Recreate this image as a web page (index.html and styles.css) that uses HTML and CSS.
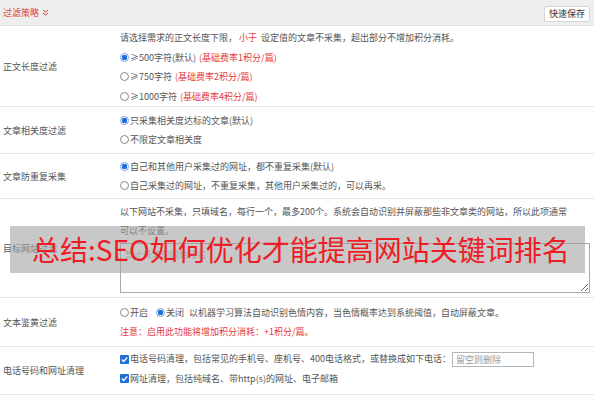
FILE: index.html
```html
<!DOCTYPE html>
<html lang="zh-CN">
<head>
<meta charset="utf-8">
<title>过滤策略</title>
<link rel="stylesheet" href="styles.css">
</head>
<body>
<div class="page">
  <div class="bar">
    <span class="bar-title">过滤策略
      <svg class="chev" width="7" height="7" viewBox="0 0 7 7"><path d="M1 1 L3.5 3 L6 1 M1 4 L3.5 6 L6 4" fill="none" stroke="#e23b3b" stroke-width="1"/></svg>
    </span>
    <button class="btn">快速保存</button>
  </div>

  <div class="row r1">
    <div class="label">正文长度过滤</div>
    <div class="content">
      <div class="line">请选择需求的正文长度下限，<span class="red gap">小于</span>设定值的文章不采集，超出部分不增加积分消耗。</div>
      <div class="line"><span class="radio on"></span>≥500字符(默认)<span class="red fee">(基础费率1积分/篇)</span></div>
      <div class="line"><span class="radio"></span>≥750字符<span class="red fee">(基础费率2积分/篇)</span></div>
      <div class="line"><span class="radio"></span>≥1000字符<span class="red fee">(基础费率4积分/篇)</span></div>
    </div>
  </div>

  <div class="row r2">
    <div class="label">文章相关度过滤</div>
    <div class="content">
      <div class="line"><span class="radio on"></span>只采集相关度达标的文章(默认)</div>
      <div class="line"><span class="radio"></span>不限定文章相关度</div>
    </div>
  </div>

  <div class="row">
    <div class="label">文章防重复采集</div>
    <div class="content">
      <div class="line"><span class="radio on"></span>自己和其他用户采集过的网址，都不重复采集(默认)</div>
      <div class="line"><span class="radio"></span>自己采集过的网址，不重复采集，其他用户采集过的，可以再采。</div>
    </div>
  </div>

  <div class="row r4">
    <div class="label">目标网站过滤</div>
    <div class="content">
      <p class="note">以下网站不采集，只填域名，每行一个，最多200个。系统会自动识别并屏蔽那些非文章类的网站，所以此项通常可以不设置。</p>
      <textarea class="area" placeholder="禁止采集的网站域名"></textarea>
    </div>
  </div>

  <div class="row r5">
    <div class="label">文本鉴黄过滤</div>
    <div class="content">
      <div class="line"><span class="radio"></span>开启<span class="sp"></span><span class="radio on"></span>关闭<span class="sp2"></span>以机器学习算法自动识别色情内容，当色情概率达到系统阈值，自动屏蔽文章。</div>
      <div class="line red">注意：启用此功能将增加积分消耗：+1积分/篇。</div>
    </div>
  </div>

  <div class="row r6">
    <div class="label">电话号码和网址清理</div>
    <div class="content">
      <div class="line tall"><span class="check"><svg width="9" height="9" viewBox="0 0 9 9"><path d="M1.8 4.6 L3.7 6.4 L7.3 2.4" fill="none" stroke="#fff" stroke-width="1.4"/></svg></span>电话号码清理，包括常见的手机号、座机号、400电话格式，或替换成如下电话：<input class="field" type="text" placeholder="留空则删除"></div>
      <div class="line"><span class="check"><svg width="9" height="9" viewBox="0 0 9 9"><path d="M1.8 4.6 L3.7 6.4 L7.3 2.4" fill="none" stroke="#fff" stroke-width="1.4"/></svg></span>网址清理，包括纯域名、带http(s)的网址、电子邮箱</div>
    </div>
  </div>

  <div class="row">
    <div class="label">标题原创度过滤</div>
    <div class="content">
      <div class="line"><span class="radio"></span>开启<span class="sp"></span><span class="radio on"></span>关闭<span class="sp2"></span><span class="red">(基础费率1积分/篇)</span></div>
    </div>
  </div>

  <div class="banner">总结:SEO如何优化才能提高网站关键词排名</div>
</div>
</body>
</html>
```

FILE: styles.css
```css
html, body {
  margin: 0;
  padding: 0;
  background: #fff;
}
body {
  font-family: "Noto Sans CJK SC", "Noto Sans", sans-serif;
  font-size: 9px;
  color: #555;
  overflow: hidden;
}
.page {
  position: relative;
  width: 594px;
}
.bar {
  height: 25px;
  background: #eeeeee;
  border-bottom: 1px solid #e2e2e2;
  display: flex;
  align-items: center;
  justify-content: space-between;
  padding: 0 4px 0 3px;
}
.bar-title {
  color: #e23b3b;
  display: flex;
  align-items: center;
  gap: 3px;
}
.btn {
  font-family: inherit;
  font-size: 9px;
  color: #333;
  background: #fff;
  border: 1px solid #d6d6d6;
  border-radius: 2px;
  height: 16px;
  width: 46px;
  padding: 0;
  margin-top: 2px;
}
.row {
  display: grid;
  grid-template-columns: 118px 1fr;
  border-bottom: 1px solid #e6e6e6;
}
.label {
  align-self: center;
  padding-left: 3px;
}
.content {
  padding: 3px 4px 3px 2px;
}
.r1 .content {
  padding: 2px 4px 0 2px;
}
.r1 .line {
  line-height: 19.5px;
}
.r2 .content {
  padding: 4px 4px 4px 2px;
}
.r4 .content {
  padding: 3px 4px 4px 2px;
}
.r5 .content {
  padding: 5px 4px 5px 2px;
}
.r6 .content {
  padding: 2px 4px 6px 2px;
}
.line {
  line-height: 19px;
  display: flex;
  align-items: center;
  white-space: nowrap;
}
.line.tall {
  line-height: 20px;
}
.red {
  color: #e4393c;
}
.fee {
  margin-left: 3px;
}
.gap {
  margin: 0 4px 0 2px;
}
.sp {
  display: inline-block;
  width: 8px;
}
.sp2 {
  display: inline-block;
  width: 5px;
}
.radio {
  display: inline-block;
  box-sizing: border-box;
  width: 9px;
  height: 9px;
  border-radius: 50%;
  border: 1px solid #8a8a8a;
  background: #fff;
  margin-right: 1px;
  flex: none;
}
.radio.on {
  border-color: #6da2e6;
  background: radial-gradient(circle, #1e6fd9 0 2.6px, #fff 3px);
}
.check {
  display: inline-block;
  width: 9px;
  height: 9px;
  background: #1e6fd9;
  border-radius: 1px;
  margin-right: 1px;
  flex: none;
}
.check svg {
  display: block;
}
.note {
  margin: 0;
  line-height: 19px;
  width: 454px;
}
.area {
  display: block;
  box-sizing: border-box;
  width: 470px;
  height: 50px;
  margin: 3px 0 0 0;
  border: 1px solid #a9a9a9;
  font-family: inherit;
  font-size: 9px;
  padding: 4px;
}
.area::placeholder {
  color: #aaa;
}
.field {
  box-sizing: border-box;
  width: 82px;
  height: 15px;
  border: 1px solid #b5b5b5;
  font-family: inherit;
  font-size: 9px;
  padding: 0 3px;
  margin-left: 1px;
}
.field::placeholder {
  color: #999;
}
.banner {
  position: absolute;
  left: 10px;
  top: 226px;
  width: 575px;
  height: 47px;
  box-sizing: border-box;
  padding-left: 22px;
  background: rgba(160, 160, 160, 0.58);
  color: #ee1c25;
  font-size: 28px;
  line-height: 47px;
  white-space: nowrap;
}
```
